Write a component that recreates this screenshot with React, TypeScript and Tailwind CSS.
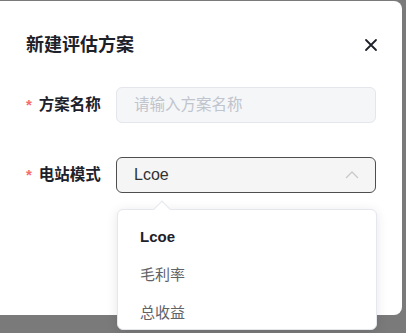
import React from 'react';

const font = { fontFamily: '"Liberation Sans", "Noto Sans CJK SC", sans-serif' };

export default function App() {
  return (
    <div className="relative h-[333px] w-[406px] overflow-hidden bg-[#7a7a7a]" style={font}>
      <div className="-ml-2 mt-px h-[314px] w-[410px] rounded-lg bg-white pl-[34px] pr-[26px]">
        <div className="-mr-[2px] flex h-[86px] items-center justify-between pt-[2px]">
          <h2 className="text-[18px] font-bold text-[#1d2129]">新建评估方案</h2>
          <svg width="14" height="14" viewBox="0 0 14 14">
            <path d="M2 2L12 12M12 2L2 12" stroke="#1d2129" strokeWidth="1.8" strokeLinecap="round" />
          </svg>
        </div>
        <div className="flex items-center">
          <div className="flex w-[90px] shrink-0 items-center">
            <span className="mr-[7px] text-[15px] font-bold text-[#f56c6c]">*</span>
            <span className="text-[15.5px] font-bold text-[#1d2129]">方案名称</span>
          </div>
          <div className="flex h-[36px] w-[260px] items-center rounded-md border border-[#e5e6eb] bg-[#f5f6f8] px-[17px] text-[15.5px] text-[#c0c4cc]">
            请输入方案名称
          </div>
        </div>
        <div className="mt-[34px] flex items-center">
          <div className="flex w-[90px] shrink-0 items-center">
            <span className="mr-[7px] text-[15px] font-bold text-[#f56c6c]">*</span>
            <span className="text-[15.5px] font-bold text-[#1d2129]">电站模式</span>
          </div>
          <div className="flex h-[36px] w-[260px] items-center justify-between rounded-md border border-[#4e4e4e] bg-[#f5f5f5] pl-[17px] pr-[16px]">
            <span className="text-[16px] text-[#303133]">Lcoe</span>
            <svg width="14" height="8" viewBox="0 0 14 8">
              <path d="M1 7L7 1L13 7" stroke="#c8c9cc" strokeWidth="1.3" fill="none" />
            </svg>
          </div>
        </div>
      </div>

      <div className="absolute left-[117px] top-[209px] h-[121px] w-[260px] rounded-md border border-[#e4e7ed] bg-white pt-[8px] shadow-[0_2px_12px_rgba(0,0,0,0.1)]">
        <div className="absolute -top-[7px] left-[38px] h-3 w-3 rotate-45 border-l border-t border-[#e4e7ed] bg-white" />
        <div className="flex h-[38px] items-center px-[22px] text-[15px] font-bold text-[#1d2129]">Lcoe</div>
        <div className="flex h-[38px] items-center px-[22px] text-[15px] text-[#606266]">毛利率</div>
        <div className="flex h-[38px] items-center px-[22px] text-[15px] text-[#606266]">总收益</div>
      </div>
    </div>
  );
}
